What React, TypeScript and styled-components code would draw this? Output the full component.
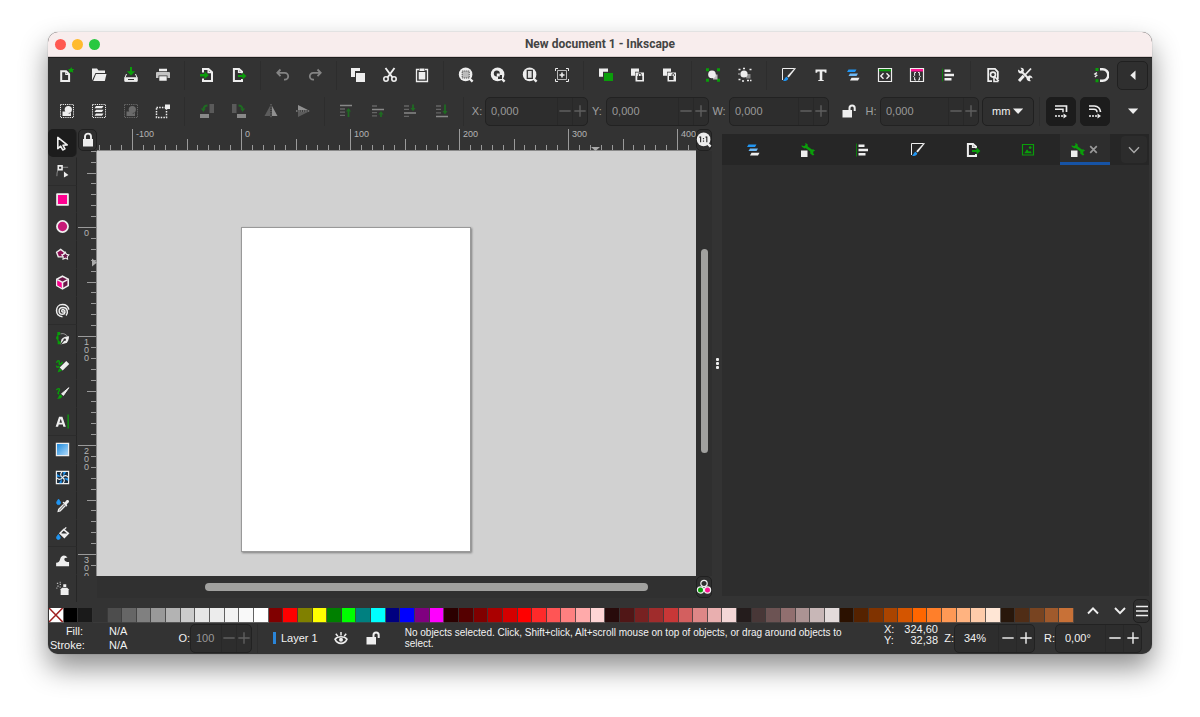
import React from "react";
import styled, { createGlobalStyle, css } from "styled-components";

const W = "#eeeeee";
const G = "#0a9e0a";
const P = "#ff1493";
const B = "#2196f3";
const BG = "#333333";

const GlobalStyle = createGlobalStyle`
  * { box-sizing: border-box; }
  body {
    margin: 0;
    background: #fff;
    font-family: "Liberation Sans", Arial, sans-serif;
    font-size: 11px;
    color: #f2f2f2;
  }
  button, input, select { font: inherit; color: inherit; margin: 0; padding: 0; border: 0; background: none; }
`;

/* ---------- icons, drawn on a 16 unit grid ---------- */

const dup = (
  <>
    <path d="M1 1h9v3H5v6H1z" fill={W} />
    <path d="M6 6h9v9H6z" fill={W} />
  </>
);
const magnifier = (
  <>
    <circle cx="7.6" cy="7.4" r="6.8" fill={W} />
    <path d="M11 11l3.6 3.6" stroke={W} strokeWidth="2.4" />
  </>
);
const layers = (
  <>
    <path d="M3.5 2.5h8l-1.5 2.4H2z" fill={B} />
    <path d="M5 6.6h8l-1.5 2.4h-8z" fill="#6fb9f5" />
    <path d="M6.5 10.8h8L13 13.4H5z" fill={W} />
  </>
);
const docExport = (
  <>
    <path d="M11 6.2V4.6L8 1.9H2.9v12.2H11v-2.2" fill="none" stroke={W} strokeWidth="2" />
    <path d="M7.6 1.5v3.8h3.8" fill="none" stroke={W} strokeWidth="1.4" />
    <path d="M7 8h4.500V5.600L15.400 9l-3.900 3.400V10H7z" fill={G} />
  </>
);
const wrench = (
  <>
    <path d="M1 8.500h6.500V15H1z" fill={W} />
    <path d="M5 4l7.500 5.500" stroke={G} strokeWidth="2.600" />
    <path d="M5.200.8L7.800 2.400 7.400 5.600 4.600 6.600 1.800 4.800l-.2-1.600 2.400 1 1.600-1.200z" fill={G} />
    <path d="M15.200 8.400L13.400 9.400l-.2 1.800 1.200 1.600-1.600.6-2.600-2 .2-3 2.600-1.200z" fill={G} />
  </>
);
const alignIcon = (
  <>
    <path d="M1.500 1.500v13" stroke="#0a7a0a" strokeWidth="1" />
    <path d="M3.500 2.500h6v2.600h-6zM3.500 6.700h9.500v2.600H3.500zM3.500 10.900h7v2.600h-7z" fill={W} />
  </>
);
const fillStroke = (
  <>
    <path d="M1.500 13V1.500h12" fill="none" stroke={W} strokeWidth="1" />
    <path d="M15 1.200L7.800 10.600 6.200 9.200 13.800 1z" fill={W} />
    <path d="M5.600 9.800l1.700 1.600c-.5 2.200-2.600 2.700-5.300 2.600 1.500-1 1.600-3.600 3.600-4.200z" fill={B} />
  </>
);
const dotted = <path d="M1.500 1.500h13v13h-13z" fill="none" stroke={W} strokeWidth="1" strokeDasharray="1.200 1" />;
const shapes = (
  <>
    <path d="M3.500 8.500h4c1 0 1 2 3.500 2l1-1.500v4H3.500z" fill={W} />
    <circle cx="9.300" cy="6.500" r="3.600" fill={W} />
  </>
);
const padlockOpen = (
  <>
    <path d="M1.500 7h9.500v7.500H1.500z" fill={W} />
    <path d="M8.500 7V5a2.600 2.600 0 0 1 5.200 0v3" fill="none" stroke={W} strokeWidth="2" />
  </>
);

const icons: Record<string, React.ReactNode> = {
  newDoc: (
    <>
      <path d="M2.200 4.200h4.900l3 3v6.900H2.200z" fill="none" stroke={W} strokeWidth="2" />
      <path d="M6.800 4v3.500h3.500" fill="none" stroke={W} strokeWidth="1.200" />
      <path d="M12.200 0l1 1.900 2.200.2-1.600 1.500.5 2.200-2.100-1-2.100 1 .5-2.200L9 2.100l2.200-.2z" fill={G} />
    </>
  ),
  open: (
    <>
      <path d="M1 13.500v-12h5l1.500 2h6.500V6H4.500z" fill={W} />
      <path d="M5 7h10.500l-1.700 7H2.200z" fill={W} />
    </>
  ),
  save: (
    <>
      <path d="M8 0v5" stroke={G} strokeWidth="2" />
      <path d="M3.800 4.200h8.400L8 8.600z" fill={G} />
      <path d="M3.500 7L2 10.500V14h12v-3.500L12.500 7" fill="none" stroke={W} strokeWidth="1" />
      <path d="M1.500 10.200h13v4.600h-13zM5 12v1h6v-1z" fill={W} fillRule="evenodd" />
    </>
  ),
  print: (
    <>
      <path d="M4 1.800h8v2.400H4z" fill={W} />
      <path d="M2 5h12a1 1 0 0 1 1 1v5h-2.500V8.500h-9V11H1V6a1 1 0 0 1 1-1z" fill="#c4c4c4" />
      <path d="M4.300 9.200h7.400v4.600H4.300z" fill={W} />
    </>
  ),
  importDoc: (
    <>
      <path d="M4 5.500V1.900h5.500L13 5.200v8.900H4v-2.600" fill="none" stroke={W} strokeWidth="2" />
      <path d="M9.200 1.500v4h4" fill="none" stroke={W} strokeWidth="1.400" />
      <path d="M1 6.900h4.500V4.400L9.800 8.200 5.500 12V9.400H1z" fill={G} />
    </>
  ),
  exportDoc: docExport,
  undo: <path d="M5.500 2.500L2.300 5.800l3.200 3.300M2.500 5.800h7.300a3 3 0 0 1 0 6.800H9" fill="none" stroke="#848484" strokeWidth="1.800" />,
  redo: <path d="M10.500 2.500l3.200 3.300-3.200 3.300M13.500 5.800H6.200a3 3 0 0 0 0 6.800H7" fill="none" stroke="#848484" strokeWidth="1.800" />,
  copy: dup,
  cut: (
    <>
      <path d="M3.500 1l7.200 9.800M12.500 1L5.300 10.800" stroke={W} strokeWidth="1.900" />
      <circle cx="4" cy="12" r="2.200" fill="none" stroke={W} strokeWidth="1.600" />
      <circle cx="12" cy="12" r="2.200" fill="none" stroke={W} strokeWidth="1.600" />
    </>
  ),
  paste: (
    <>
      <path d="M5 2.500H2.500v12h11v-12H11" fill="none" stroke={W} strokeWidth="1.300" />
      <path d="M5.500 1.500h5V4h-5z" fill={W} />
      <path d="M4.700 5h6.600v7.500H4.700z" fill={W} />
    </>
  ),
  zoomSel: (
    <>
      {magnifier}
      <path d="M4.200 4h7v7h-7z" fill="#bbb" stroke="#444" strokeWidth=".9" strokeDasharray="1.200 .8" />
    </>
  ),
  zoomDraw: (
    <>
      {magnifier}
      <path d="M8 8h4v4H8z" fill={BG} />
      <circle cx="6.800" cy="6.400" r="3" fill={BG} />
      <path d="M6.800 6.400h3v3h-3z" fill={W} />
    </>
  ),
  zoomPage: (
    <>
      {magnifier}
      <path d="M5.300 3.400h5v8h-5z" fill="#ddd" stroke={BG} strokeWidth="1.300" />
    </>
  ),
  zoomCenter: (
    <>
      <path d="M3.500 3.500h9v9h-9z" fill="none" stroke="#bbb" strokeWidth="1" />
      <path d="M8 5.500v5M5.500 8h5" stroke={W} strokeWidth="1.600" />
      <path d="M1.500 4V1.500H4M12 1.500h2.500V4M14.500 12v2.500H12M4 14.500H1.500V12" fill="none" stroke={W} strokeWidth="1" />
    </>
  ),
  duplicate: (
    <>
      <path d="M1 1.500h9v3.200H5v5H1z" fill={W} />
      <path d="M6 6h9v8H6z" fill={G} />
    </>
  ),
  clone: (
    <>
      <path d="M1 1.500h8v3.300H5v4H1zM5.500 5.500H14v9H5.500z" fill={W} />
      <path d="M7.300 9h5v4h-5z" fill={BG} />
      <path d="M8.400 9V7.600a1.400 1.400 0 0 1 2.800 0V9" fill="none" stroke={BG} strokeWidth="1" />
    </>
  ),
  unclone: (
    <>
      <path d="M1 1.500h8v3.300H5v4H1zM5.500 5.500H14v9H5.500z" fill={W} />
      <path d="M7 9h4.500v4H7z" fill={BG} />
      <path d="M10 9V7.800a1.200 1.200 0 0 1 2.400 0v1" fill="none" stroke={BG} strokeWidth="1" />
    </>
  ),
  group: (
    <>
      <path d="M1 1.200h3v3H1zM12 1.200h3v3h-3zM1 11.800h3v3H1zM12 11.800h3v3h-3z" fill={G} />
      <path d="M8 7.500h4.500v5H8z" fill="#bbb" />
      <circle cx="7" cy="7.400" r="3.800" fill={W} />
    </>
  ),
  ungroup: (
    <>
      <path d="M9 7h4.500v4.500H9z" fill="#888" />
      <circle cx="7" cy="7" r="3.600" fill={W} />
      <path d="M1.500 2.500h2M6 1.500h2M12.500 2.500h2M1.500 12.500h2M5 14h2M10 13.500h2M13 13.500h1.500M1.500 7h1" stroke={W} strokeWidth="1.700" />
    </>
  ),
  fillStroke,
  text: <path d="M2.500 2.500h11v3.200h-1.600l-.5-1.200H9.300v8.600h1.400V14H5.300v-.9h1.400V4.500H4.600l-.5 1.200H2.500z" fill={W} />,
  layers,
  xml: (
    <>
      <path d="M1.500 1.500h13v13h-13z" fill="none" stroke={W} strokeWidth="1.200" />
      <path d="M2 2.200h12v2H2z" fill={G} />
      <path d="M6.500 6.200L3.800 9l2.700 2.800M9.500 6.200L12.200 9l-2.700 2.800" fill="none" stroke={W} strokeWidth="1.400" />
    </>
  ),
  selectors: (
    <>
      <path d="M1.500 1.500h13v13h-13z" fill="none" stroke={W} strokeWidth="1.200" />
      <path d="M2 2h12v2.400H2z" fill={P} />
      <path d="M7 5.500H5.600v3l-1 1 1 1v2.500H7M9 5.500h1.400v3l1 1-1 1v2.500H9" fill="none" stroke={W} strokeWidth="1" />
    </>
  ),
  align: alignIcon,
  docProps: (
    <>
      <path d="M12.800 12V4.800L10 1.900H3.200v12.200H7" fill="none" stroke={W} strokeWidth="1.800" />
      <circle cx="8" cy="7.600" r="2.500" fill="none" stroke={W} strokeWidth="1.600" />
      <path d="M9 9l4.800 5M9 10v4.500h4.500" stroke={W} strokeWidth="1.600" fill="none" />
    </>
  ),
  prefs: (
    <>
      <path d="M4 4l8.500 8.500" stroke={W} strokeWidth="2" />
      <path d="M1.200 2.400l2.400 1.800 1.200-1.400L3.400.7c2.600-.4 4.200 1.500 3.400 3.600L4.900 6.400c-2.200.7-4.500-1.400-3.700-4z" fill={W} />
      <path d="M9.500 11l2.500-2.500c2-.5 3.700 1 3.500 3l-1.800-1-1.200 1.500 1.300 2c-2.200.8-4.500-1-4.300-3z" fill={W} />
      <path d="M14 1.500L7.500 8.500" stroke={W} strokeWidth="1.800" />
      <path d="M6.800 8.800L2 14" stroke={W} strokeWidth="3" />
    </>
  ),
  snap: (
    <>
      <path d="M7 2.300h2.600a5.600 5.600 0 0 1 0 11.400H7" fill="none" stroke={W} strokeWidth="2.500" />
      <path d="M2.500 1h3v3h-3zM2.500 12.200h3v3h-3z" fill={G} />
      <path d="M4 5.600L1.800 7l2 1.400-2 1.600" fill="none" stroke={W} strokeWidth="1.300" />
    </>
  ),
  selAll: <>{dotted}{shapes}</>,
  selLayers: (
    <>
      {dotted}
      <path d="M5 3h7.500L11 5.200H3.500zM5 6.800h7.500L11 9H3.500zM5 10.600h7.500L11 12.800H3.500z" fill={W} />
    </>
  ),
  deselect: <g opacity=".3">{dotted}{shapes}</g>,
  selTouch: (
    <>
      <path d="M1.500 4.500h10v10h-10z" fill="none" stroke={W} strokeWidth="1.500" strokeDasharray="1.500 1.200" />
      <path d="M10 1.500h5V6h-5z" fill={W} />
    </>
  ),
  rotL: (
    <>
      <path d="M10.500 1H15v9h-4.500z" fill="#5a5a5a" />
      <path d="M1 11h9v4H1z" fill="#888" />
      <path d="M8.500 2.500C6 2.500 4.800 4 4.500 6" fill="none" stroke="#1f6b22" strokeWidth="2" />
      <path d="M1.800 5.500h5L4.400 9z" fill="#1f6b22" />
    </>
  ),
  rotR: (
    <>
      <path d="M1 1h4.500v9H1z" fill="#5a5a5a" />
      <path d="M6 11h9v4H6z" fill="#888" />
      <path d="M7.500 2.500C10 2.500 11.200 4 11.500 6" fill="none" stroke="#1f6b22" strokeWidth="2" />
      <path d="M9.200 5.500h5L11.600 9z" fill="#1f6b22" />
    </>
  ),
  flipH: (
    <>
      <path d="M7 3v10H1.500z" fill="#5c5c5c" />
      <path d="M8 1v14" stroke="#777" strokeWidth="1" strokeDasharray="1.500 .8" />
      <path d="M9 3v10h5.500z" fill="#909090" />
    </>
  ),
  flipV: (
    <>
      <path d="M3 7V2l10 5z" fill="#909090" />
      <path d="M1 8h14" stroke="#aaa" strokeWidth="1" strokeDasharray="1.500 .8" />
      <path d="M3 9v5l10-5z" fill="#5c5c5c" />
    </>
  ),
  toTop: (
    <>
      <path d="M2 2.500h12" stroke="#888" strokeWidth="1.700" />
      <path d="M2 6h5M2 9.200h5M2 12.400h5" stroke="#666" strokeWidth="1.300" />
      <path d="M10.500 14V6" stroke="#1f6b22" strokeWidth="1.800" />
      <path d="M8 8.500h5L10.500 5z" fill="#1f6b22" />
    </>
  ),
  raise: (
    <>
      <path d="M2 6.500h12" stroke="#888" strokeWidth="1.700" />
      <path d="M2 3h5M2 9.700h5M2 12.900h5" stroke="#666" strokeWidth="1.300" />
      <path d="M11 14v-4" stroke="#1f6b22" strokeWidth="1.800" />
      <path d="M8.500 11.500h5L11 8z" fill="#1f6b22" />
    </>
  ),
  lower: (
    <>
      <path d="M2 10h12" stroke="#888" strokeWidth="1.700" />
      <path d="M2 3h5M2 6.300h5M2 13.300h5" stroke="#666" strokeWidth="1.300" />
      <path d="M11 1.500v4" stroke="#1f6b22" strokeWidth="1.800" />
      <path d="M8.500 5h5L11 8.300z" fill="#1f6b22" />
    </>
  ),
  toBottom: (
    <>
      <path d="M2 13.500h12" stroke="#888" strokeWidth="1.700" />
      <path d="M2 3h5M2 6.300h5M2 9.800h5" stroke="#666" strokeWidth="1.300" />
      <path d="M11 1.500v8" stroke="#1f6b22" strokeWidth="1.800" />
      <path d="M8.500 8h5L11 11.500z" fill="#1f6b22" />
    </>
  ),
  padlockOpen,
  padlock: (
    <>
      <path d="M3 7h10v7.500H3z" fill={W} />
      <path d="M5 7.500V4.600a3 3 0 0 1 6 0v2.900" fill="none" stroke={W} strokeWidth="1.900" />
    </>
  ),
  scaleStroke: (
    <>
      <path d="M2 3h11.500v6" fill="none" stroke={W} strokeWidth="1.700" />
      <path d="M2 6.300h8v3" fill="none" stroke={W} strokeWidth="1.500" />
      <path d="M2 13h8" stroke={W} strokeWidth="1.700" strokeDasharray="2 1" />
      <path d="M10.500 10.500L14 13l-3.500 2.500z" fill={W} />
    </>
  ),
  scaleCorner: (
    <>
      <path d="M2 3h5.500a6 6 0 0 1 6 6" fill="none" stroke={W} strokeWidth="1.700" />
      <path d="M2 6.300h5a3 3 0 0 1 3 3" fill="none" stroke={W} strokeWidth="1.500" />
      <path d="M2 13h8" stroke={W} strokeWidth="1.700" strokeDasharray="2 1" />
      <path d="M10.500 10.500L14 13l-3.500 2.500z" fill={W} />
    </>
  ),
  triLeft: <path d="M10.500 3.500v9.500L5.300 8.300z" fill={W} />,
  triDown: <path d="M3 5.500h10.200L8.100 11z" fill={W} />,
  chevDown: <path d="M3 5.300L8 10.500l5-5.200" fill="none" stroke="#aaa" strokeWidth="1.400" />,
  up: <path d="M3 10.500L8 5.300l5 5.200" fill="none" stroke={W} strokeWidth="1.900" />,
  down: <path d="M3 5L8 10.200 13 5" fill="none" stroke={W} strokeWidth="1.900" />,
  menu: <path d="M2 3.500h12M2 8h12M2 12.500h12" stroke={W} strokeWidth="1.500" />,
  minus: <path d="M1.500 8h13" stroke="currentColor" strokeWidth="1.600" />,
  plus: <path d="M1.500 8h13M8 1.500v13" stroke="currentColor" strokeWidth="1.600" />,
  docExport,
  wrench,
  image: (
    <>
      <path d="M2.500 2.500h11v10.500h-11z" fill="none" stroke={G} strokeWidth="1.200" />
      <path d="M4.300 11.200L7 7.200l2 2.500 1.200-1 1.600 2.500z" fill={G} />
      <circle cx="10.200" cy="5.600" r="1.400" fill={G} />
    </>
  ),
  close: <path d="M4.500 4.500l7 7M11.500 4.500l-7 7" stroke="#999" strokeWidth="1.800" />,
  zoom1: (
    <>
      {magnifier}
      <path d="M4.600 4.600v5.600M3.400 5.400l1.200-.6M10.800 4.600v5.600M9.600 5.400l1.200-.6M7.500 6v1.200M7.500 8.600v1.200" stroke={BG} strokeWidth="1.200" />
    </>
  ),
  cms: (
    <>
      <circle cx="8" cy="4.500" r="3.200" fill="none" stroke={W} strokeWidth="1.200" />
      <circle cx="4.500" cy="11" r="3.100" fill={G} stroke={W} strokeWidth="1.200" />
      <circle cx="11.500" cy="11" r="3.100" fill={P} stroke={W} strokeWidth="1.200" />
    </>
  ),
  eye: (
    <>
      <path d="M2 9.200C4.500 6 11.500 6 14 9.200 11.500 14.800 4.500 14.800 2 9.200z" fill="none" stroke={W} strokeWidth="1.600" />
      <circle cx="8" cy="9.800" r="2" fill={W} />
      <path d="M8 2v3.500M2.800 3.800L4.800 6.200M13.200 3.800L11.200 6.200" stroke={W} strokeWidth="1.500" />
    </>
  ),
  arrow: <path d="M3 1.500v12l3-2.600 2.200 4 2.400-1.200-2-3.800 4.400-.4z" fill="none" stroke={W} strokeWidth="1.700" strokeLinejoin="round" />,
  node: (
    <>
      <path d="M2 13C2 8 3 5.500 5 4M7 3.500h7" fill="none" stroke="#8a8a8a" strokeWidth="1" />
      <path d="M3.500 2h4v4h-4z" fill={BG} stroke={W} strokeWidth="1.700" />
      <path d="M9.500 8v6.500l4.800-2.800z" fill={W} />
    </>
  ),
  rect: <path d="M2.200 2.200h11.600v11.600H2.200z" fill="#ff0090" stroke={W} strokeWidth="1.900" strokeLinejoin="round" />,
  ellipse: <circle cx="8" cy="8" r="5.900" fill="#c71a78" stroke={W} strokeWidth="1.900" />,
  star: (
    <>
      <path d="M6 2.500l4 3-1.500 5H3.500L1.700 5.600z" fill="#8e1155" stroke={W} strokeWidth="1.500" />
      <path d="M11 5.500l1.300 2.300 2.500.6-1.700 1.900.3 2.700-2.400-1.100-2.500 1.100.3-2.700L7.200 8.400l2.500-.6z" fill="#6a1748" stroke={W} strokeWidth="1.100" />
    </>
  ),
  cube: (
    <>
      <path d="M8 1.300l6.100 3.100v6.900L8 14.800l-6.100-3.500V4.400z" fill="#6a1748" stroke={W} strokeWidth="1.700" />
      <path d="M2.500 5.500l5 2.400v6L2.500 11z" fill="#ff0090" />
      <path d="M2.500 5L8 7.800 13.500 5M8 7.800v6.500" fill="none" stroke={W} strokeWidth="1.600" />
    </>
  ),
  spiral: (
    <path
      d="M9.400 9.200a1.300 1.300 0 1 1-.3-2c2.400.8 2 4.800-1.100 4.800-4.600 0-5-7 .2-7.200 5.400-.2 6.200 5.600 3.600 8.600M8 14.600C-.6 14.600-.4 1.600 8 1.600c3.600 0 6 2 6.800 5.400"
      fill="none" stroke={W} strokeWidth="1.600"
    />
  ),
  pen: (
    <>
      <path d="M2.500 1h3v3.200h-3zM1.200 5.800h2.600v3H1.200zM2.800 11h3.200v3H2.800z" fill={G} />
      <path d="M3.500 3l-1 4M2.500 8l1.500 4" stroke={G} strokeWidth="1.200" />
      <path d="M6 3c4-1 6 1 7.500 3" stroke="#999" fill="none" />
      <path d="M5.800 14.500l1-5.500c1.500-2.300 5-3.500 8.200-3.500-.2 3.500-1 6.300-3.700 7.600z" fill={W} />
      <path d="M5.800 14.500L10 9.500" stroke={BG} strokeWidth="1.100" />
      <circle cx="10.400" cy="9.200" r="1.300" fill={BG} />
    </>
  ),
  pencil: (
    <>
      <path d="M1.500 4c1.500-3 3.500-3 3 0s2 2.200 3.500-1M1.500 7c.5 2.500 2.500 2 3 .5" fill="none" stroke={G} strokeWidth="1.500" />
      <path d="M4.500 9.500l3 3-4.800 2z" fill={G} />
      <path d="M12 2.200l3.200 3.200-7 6.800-3.200-3.200z" fill={W} />
    </>
  ),
  brush: (
    <>
      <path d="M1.500 4.500c2-3 4-1.500 3 .5s-2.300 3 0 3.500" fill="none" stroke={G} strokeWidth="1.500" />
      <path d="M5.800 9l2 2c-.8 2.400-3 2.800-5.600 2.800 1.600-1 1.500-4.200 3.600-4.800z" fill={G} />
      <path d="M14.800 1.800L9 10 7 8.300z" fill={W} stroke={W} strokeWidth="1" />
    </>
  ),
  textTool: (
    <>
      <path d="M4.300 3h3.600l3.600 10.500H8.900L8.300 11.300H4l-.7 2.200H.7zM4.700 9.200h2.800L6.100 5z" fill={W} fillRule="evenodd" />
      <path d="M14 .5v15" stroke={G} strokeWidth="1.400" />
    </>
  ),
  gradient: <path d="M1.500 1.500h13v13h-13z" fill="url(#blueGrad)" stroke={W} strokeWidth="1.300" />,
  mesh: (
    <>
      <path d="M1.500 1.500h13v13h-13z" fill="#1d2f40" stroke={W} strokeWidth="1.300" />
      <path d="M8 8c1-3 1-4 .8-6h3zM8 8c3 1 4 1 6 .8v3zM8 8c-1 3-1 4-.8 6h-3zM8 8c-3-1-4-1-6-.8v-3z" fill={B} />
      <path d="M8 8C5.500 6 5.500 4 7.500 2M8 8c2-2.500 4-2.500 6-.5M8 8c2.500 2 2.500 4 .5 6M8 8c-2 2.500-4 2.500-6 .5" fill="none" stroke={W} strokeWidth="1.200" />
    </>
  ),
  dropper: (
    <>
      <path d="M3.800 1.200C5 3 5.800 4 5.800 5a2 2 0 0 1-4 0c0-1 .8-2 2-3.800z" fill={B} stroke={B} />
      <path d="M9.300 6.800L4 12.200l-.5 2 2-.5 5.300-5.400" fill="none" stroke={W} strokeWidth="1.500" />
      <path d="M8 4.500l1.300-.5 1 .7 2-2.200c1.500-1.300 3.700.5 2.200 2.200l-2 2 .6 1.200-1.200 1.300z" fill={W} />
    </>
  ),
  bucket: (
    <>
      <path d="M3.600 9c1.200 1.600 1.900 2.400 1.900 3.400a1.900 1.900 0 0 1-3.800 0c0-1 .7-1.800 1.900-3.400z" fill={B} stroke={B} />
      <path d="M9.300 3.800l4.900 4.100-4.200 4.300-4.600-4.400z" fill="none" stroke={W} strokeWidth="1.700" />
      <path d="M5.600 8h8.500l-4.100 4.200z" fill={W} />
      <path d="M9 4.500l3-3" fill="none" stroke={W} strokeWidth="1.400" />
    </>
  ),
  tweak: <path d="M1.200 14.200v-3.700c2.600 0 3.800-1.500 4.300-4C6.500 2.300 11.200 1.200 13.400 5.500c-2.200-.9-3.900.1-3.300 2 .4 1.300 2 2.200 4.900 2.200v4.500z" fill={W} />,
  spray: (
    <>
      <path d="M6 8.700l1.500-1.500h5.500l1.500 1.500V15H6z" fill={W} />
      <path d="M8.800 3.500h3.200v2.800H8.800z" fill={W} />
      <path d="M2 2.500h1.400M5 3.500h1.400M2.500 5.500h1.400M5 6.500h1M5 1.500h1M1.500 7.500h1" stroke="#bbb" strokeWidth="1.300" />
    </>
  ),
};

const Svg = styled.svg`
  display: block;
  flex: none;
`;

function Icon({ name, size = 16 }: { name: string; size?: number }) {
  return (
    <Svg width={size} height={size} viewBox="0 0 16 16" aria-hidden="true">
      {icons[name]}
    </Svg>
  );
}

/* ---------- window chrome ---------- */

const Screen = styled.div`
  min-height: 100vh;
  padding: 32px 48px 63px;
  display: flex;
  background: #fff;
`;

const Window = styled.div`
  flex: 1;
  min-width: 0;
  display: flex;
  flex-direction: column;
  border-radius: 10px;
  overflow: hidden;
  background: ${BG};
  box-shadow: 0 0 1px rgba(0, 0, 0, 0.5), 0 14px 28px rgba(0, 0, 0, 0.44);
`;

const TitleBar = styled.header`
  height: 25px;
  display: grid;
  grid-template-columns: 1fr auto 1fr;
  align-items: center;
  padding: 0 7px;
  background: #f8eded;
  border-bottom: 1px solid #d8cccc;
  color: #444;
`;

const Title = styled.h1`
  margin: 0;
  font: 700 12px/16px Roboto, "Liberation Sans", sans-serif;
`;

const Lights = styled.div`
  display: flex;
  gap: 6px;
`;

const Light = styled.button<{ $color: string }>`
  width: 11px;
  height: 11px;
  border-radius: 50%;
  background: ${(p) => p.$color};
`;

/* ---------- toolbars ---------- */

const Toolbar = styled.div<{ $first?: boolean }>`
  height: 36px;
  display: flex;
  align-items: center;
  padding: 0 3px;
  ${(p) => p.$first && css`
    padding-right: 4px;
    box-shadow: inset 0 1px #1e1e1e;
  `}
`;

const ToolButton = styled.button<{ $gap?: boolean }>`
  width: 32px;
  height: 30px;
  display: grid;
  place-items: center;
  ${(p) => p.$gap && css`margin-left: 7px;`}
`;

const Separator = styled.span<{ $tight?: boolean }>`
  width: 1px;
  height: 29px;
  margin: 0 ${(p) => (p.$tight ? 5 : 6)}px 0 5px;
  background: #2d2d2d;
`;

const Spacer = styled.span`
  flex: 1;
`;

const FramedButton = styled.button<{ $w: number; $h?: number; $dark?: boolean }>`
  width: ${(p) => p.$w}px;
  height: ${(p) => p.$h ?? 29}px;
  flex: none;
  justify-self: end;
  display: grid;
  place-items: center;
  place-content: center;
  border: 1px solid ${(p) => (p.$dark ? "#1c1c1c" : "#202020")};
  border-radius: 5px;
  background: ${(p) => (p.$dark ? "#1c1c1c" : "#2f2f2f")};
`;

const FieldLabel = styled.label<{ $on?: boolean; $w: number }>`
  width: ${(p) => p.$w}px;
  flex: none;
  text-align: ${(p) => (p.$on ? "right" : "center")};
  color: ${(p) => (p.$on ? "#f2f2f2" : "#a0a0a0")};
`;

const Spin = styled.div<{ $w: number; $on?: boolean }>`
  width: ${(p) => p.$w}px;
  height: 29px;
  flex: none;
  display: flex;
  border: 1px solid #222;
  border-radius: 5px;
  background: #2d2d2d;
  color: ${(p) => (p.$on ? "#f2f2f2" : "#5f5f5f")};

  input {
    flex: 1;
    min-width: 0;
    padding-left: ${(p) => (p.$on ? 9 : 5)}px;
    color: ${(p) => (p.$on ? "#f2f2f2" : "#999")};
  }
  button {
    width: ${(p) => (p.$on ? 18 : 15)}px;
    display: grid;
    place-items: center;
    border-left: 1px solid #282828;
  }
`;

interface SpinProps {
  id: string;
  label: string;
  labelW: number;
  w: number;
  value: string;
  on?: boolean;
  bright?: boolean;
}

function SpinField({ id, label, labelW, w, value, on, bright }: SpinProps) {
  return (
    <>
      <FieldLabel htmlFor={id} $w={labelW} $on={on || bright}>{label}</FieldLabel>
      <Spin $w={w} $on={on}>
        <input id={id} defaultValue={value} />
        <button aria-label="Decrease"><Icon name="minus" size={14} /></button>
        <button aria-label="Increase"><Icon name="plus" size={14} /></button>
      </Spin>
    </>
  );
}

const UnitBox = styled.div`
  position: relative;
  width: 52px;
  height: 29px;
  margin-left: 3px;

  select {
    appearance: none;
    width: 100%;
    height: 100%;
    padding-left: 9px;
    border: 1px solid #202020;
    border-radius: 5px;
    background: #2f2f2f;
  }
  svg {
    position: absolute;
    right: 8px;
    top: 6px;
    pointer-events: none;
  }
`;

const LockSlot = styled.button`
  width: 33px;
  height: 29px;
  display: grid;
  place-items: center;
  padding-left: 6px;
`;

/* ---------- work area ---------- */

const Main = styled.main`
  flex: 1;
  min-height: 473px;
  display: flex;
`;

const Toolbox = styled.nav`
  width: 29px;
  display: flex;
  flex-direction: column;
`;

const Tool = styled.button<{ $active?: boolean; $line?: boolean }>`
  flex: 1;
  display: grid;
  place-items: center;
  border-radius: ${(p) => (p.$active ? 5 : 0)}px;
  background: ${(p) => (p.$active ? "#1c1c1c" : "none")};
  border-top: 1px solid ${(p) => (p.$line ? "#2c2c2c" : "transparent")};
  border-right: 1px solid #262626;
`;

const Editor = styled.section`
  flex: 1;
  min-width: 0;
  display: grid;
  grid-template-columns: 20px minmax(0, 1fr) 16px;
  grid-template-rows: 22px minmax(0, 1fr) 22px;
  padding-bottom: 4px;
`;

const RulerBox = styled.div`
  contain: size;
  overflow: hidden;
  background: ${BG};
  svg { display: block; }
  text { fill: #b4b4b4; font-size: 9px; }
`;

const Canvas = styled.div`
  position: relative;
  overflow: hidden;
  background: #d1d1d1;
`;

const Sheet = styled.div`
  position: absolute;
  left: 144px;
  top: 76px;
  width: 230px;
  height: 325px;
  background: #fff;
  border: 1px solid #999;
  box-shadow: 1px 1px 2px rgba(0, 0, 0, 0.4);
`;

const HTrack = styled.div`
  padding: 7px 8% 0 18%;
  background: #303030;
  div { height: 8px; border-radius: 4px; background: #a1a19f; }
`;

const VTrack = styled.div`
  display: grid;
  grid-template-rows: 23fr 48fr 29fr;
  justify-items: center;
  background: #2f2f2f;
  div { grid-row: 2; width: 7px; border-radius: 4px; background: #a1a19f; }
`;

const CornerBlank = styled.div`
  background: ${BG};
`;

const Grip = styled.div`
  width: 10px;
  padding-bottom: 4px;
  display: flex;
  flex-direction: column;
  align-items: center;
  justify-content: center;
  gap: 1px;
  i { width: 3px; height: 3px; border-radius: 1px; background: #eee; }
`;

const Dock = styled.aside`
  width: 427px;
  margin: 5px 3px 6px 0;
  background: #2d2d2d;
`;

const TabBar = styled.div`
  height: 31px;
  display: flex;
  align-items: stretch;
  padding: 0 2px 0 3px;
  background: #262626;
`;

const Tab = styled.button<{ $active?: boolean }>`
  width: ${(p) => (p.$active ? 50 : 55)}px;
  display: flex;
  align-items: center;
  justify-content: center;
  ${(p) => p.$active && css`
    margin-left: 5px;
    background: #2d2d2d;
    box-shadow: inset 0 -3px #1653a5;
  `}
`;

const TabMenu = styled.button`
  width: 26px;
  margin: 2px 0 2px auto;
  display: grid;
  place-items: center;
  border-radius: 4px;
  background: #2c2c2c;
`;

/* ---------- palette and status ---------- */

const PaletteRow = styled.div`
  height: 21px;
  display: flex;
  align-items: flex-end;
  padding: 0 2px 0 1px;
`;

const Swatches = styled.div`
  flex: 1;
  height: 15px;
  display: flex;
`;

const Swatch = styled.button<{ $color: string }>`
  flex: 1 1 0;
  min-width: 0;
  background: ${(p) => p.$color};
  border: solid rgba(60, 60, 60, 0.8);
  border-width: 0 1px 1px 0;
`;

const NoneSwatch = styled(Swatch)`
  svg { display: block; width: 100%; height: 100%; }
`;

const PaletteButtons = styled.div`
  display: flex;
  margin-left: 5px;
`;

const PaletteButton = styled.button`
  width: 27px;
  height: 24px;
  display: grid;
  place-items: center;
`;

const StatusBar = styled.footer`
  height: 31px;
  display: flex;
  align-items: center;
  padding: 0 10px 1px 2px;
`;

const StyleTable = styled.dl`
  width: 127px;
  margin: 0;
  display: grid;
  grid-template-columns: 33px 1fr;
  column-gap: 26px;
  line-height: 14px;
  dt { text-align: right; }
  dd { margin: 0; }
`;

const LayerButton = styled.button`
  display: flex;
  align-items: center;
  gap: 5px;
  margin: 0 7px 0 9px;
  white-space: nowrap;
  &::before { content: ""; width: 3px; height: 12px; background: #2a85d8; }
`;

const StatusIcon = styled.button`
  width: 32px;
  height: 28px;
  flex: none;
  display: grid;
  place-items: center;
`;

const Message = styled.p`
  flex: 1;
  margin: 0 16px;
  font-size: 10px;
  line-height: 11px;
`;

const Coords = styled.dl`
  width: 54px;
  flex: none;
  margin: 0 6px 6px 4px;
  display: grid;
  grid-template-columns: 14px 1fr;
  line-height: 11px;
  dd { margin: 0; text-align: right; }
`;

/* ---------- rulers ---------- */

const STEP = 109;
const range = (from: number, to: number) => Array.from({ length: to - from + 1 }, (_, i) => from + i);

function HorizontalRuler() {
  const zero = 145;
  return (
    <RulerBox>
      <svg width="1600" height="22">
        {range(-13, 130).map((n) => {
          const x = Math.round(zero + (n * STEP) / 10) - 0.5;
          const top = n % 10 === 0 ? 0 : n % 5 === 0 ? 10 : 16;
          return <path key={n} d={`M${x} ${top}V22`} stroke="#9a9a9a" />;
        })}
        {range(-1, 4).map((n) => (
          <text key={n} x={zero + n * STEP + 3} y="8">{n * 100}</text>
        ))}
        <path d="M0 21.500H1600" stroke="#8a8a8a" />
        <path d="M494 18h9l-4.500 4z" fill="#aaa" />
      </svg>
    </RulerBox>
  );
}

function VerticalRuler() {
  const zero = 77;
  return (
    <RulerBox>
      <svg width="20" height="1200">
        {range(-7, 100).map((n) => {
          const y = Math.round(zero + (n * STEP) / 10) - 0.5;
          const left = n % 10 === 0 ? 1 : n % 5 === 0 ? 10 : 14;
          return <path key={n} d={`M${left} ${y}H20`} stroke="#9a9a9a" />;
        })}
        {range(0, 3).map((n) =>
          String(n * 100).split("").map((d, i) => (
            <text key={`${n}-${i}`} x="7" y={zero + n * STEP + 8 + i * 8}>{d}</text>
          ))
        )}
        <path d="M19.500 0V1200" stroke="#8a8a8a" />
        <path d="M15 107.500v8l5-4z" fill="#aaa" />
      </svg>
    </RulerBox>
  );
}

/* ---------- data ---------- */

const commandGroups = [
  ["newDoc", "open", "save", "print"],
  ["importDoc", "exportDoc"],
  ["undo", "redo"],
  ["copy", "cut", "paste"],
  ["zoomSel", "zoomDraw", "zoomPage", "zoomCenter"],
  ["duplicate", "clone", "unclone"],
  ["group", "ungroup"],
  ["fillStroke", "text", "layers", "xml", "selectors", "align"],
  ["docProps", "prefs"],
];
const tightAfter = [2, 5];

const selectGroups = [
  ["selAll", "selLayers", "deselect", "selTouch"],
  ["rotL", "rotR", "flipH", "flipV"],
  ["toTop", "raise", "lower", "toBottom"],
];

const tools = [
  "arrow", "node", "rect", "ellipse", "star", "cube", "spiral", "pen", "pencil",
  "brush", "textTool", "gradient", "mesh", "dropper", "bucket", "tweak", "spray",
];
const toolLines = ["rect", "pen", "gradient", "tweak"];

const dockTabs = ["layers", "wrench", "align", "fillStroke", "docExport", "image"];

const palette = (
  "000000 1a1a1a 333333 4d4d4d 666666 808080 999999 b3b3b3 cccccc e6e6e6 ececec f2f2f2 f9f9f9 ffffff " +
  "800000 ff0000 808000 ffff00 008000 00ff00 008080 00ffff 000080 0000ff 800080 ff00ff " +
  "2b0000 550000 800000 aa0000 d40000 ff0000 ff2a2a ff5555 ff8080 ffaaaa ffd5d5 " +
  "280b0b 501616 782121 a02c2c c83737 d35f5f de8787 e9afaf f4d7d7 " +
  "241c1c 483737 6c5353 916f6f ac9393 c8b7b7 e3dbdb " +
  "2b1100 552200 803300 aa4400 d45500 ff6600 ff7f2a ff9955 ffb380 ffccaa ffe6d5 " +
  "28170b 502d16 784421 a05a2c c87137"
).split(" ");

export default function App() {
  return (
    <Screen>
      <GlobalStyle />
      <Window>
        <TitleBar>
          <Lights>
            <Light $color="#ff5850" aria-label="Close" />
            <Light $color="#ffbb2e" aria-label="Minimize" />
            <Light $color="#28c840" aria-label="Zoom" />
          </Lights>
          <Title>New document 1 - Inkscape</Title>
        </TitleBar>

        <Toolbar $first>
          {commandGroups.map((group, i) => (
            <React.Fragment key={i}>
              {i > 0 && <Separator $tight={tightAfter.includes(i - 1)} />}
              {group.map((name) => (
                <ToolButton key={name} aria-label={name}><Icon name={name} /></ToolButton>
              ))}
            </React.Fragment>
          ))}
          <Spacer />
          <ToolButton aria-label="Snapping"><Icon name="snap" /></ToolButton>
          <FramedButton $w={31} aria-label="Snap options"><Icon name="triLeft" /></FramedButton>
        </Toolbar>

        <Toolbar>
          {selectGroups.map((group, i) => (
            <React.Fragment key={i}>
              {i > 0 && <Separator $tight={i === 2} />}
              {group.map((name) => (
                <ToolButton key={name} aria-label={name}><Icon name={name} /></ToolButton>
              ))}
            </React.Fragment>
          ))}
          <Separator $tight />
          <SpinField id="x" label="X:" labelW={16} w={103} value="0,000" />
          <SpinField id="y" label="Y:" labelW={18} w={103} value="0,000" />
          <SpinField id="w" label="W:" labelW={20} w={100} value="0,000" />
          <LockSlot aria-label="Lock proportions"><Icon name="padlockOpen" /></LockSlot>
          <SpinField id="h" label="H:" labelW={18} w={99} value="0,000" />
          <UnitBox>
            <select aria-label="Unit" defaultValue="mm"><option>mm</option></select>
            <Icon name="triDown" />
          </UnitBox>
          <Separator />
          <FramedButton $w={30} $dark aria-label="Scale stroke width"><Icon name="scaleStroke" /></FramedButton>
          <Spacer />
          <FramedButton $w={30} $dark aria-label="Scale rounded corners"><Icon name="scaleCorner" /></FramedButton>
          <ToolButton $gap aria-label="More"><Icon name="triDown" /></ToolButton>
        </Toolbar>

        <Main>
          <Toolbox>
            {tools.map((name, i) => (
              <Tool key={name} $active={i === 0} $line={toolLines.includes(name)} aria-label={name}>
                <Icon name={name} size={15} />
              </Tool>
            ))}
          </Toolbox>

          <Editor>
            <FramedButton $w={19} $h={22} aria-label="Lock guides"><Icon name="padlock" /></FramedButton>
            <HorizontalRuler />
            <FramedButton $w={16} $h={22} aria-label="Zoom 1:1"><Icon name="zoom1" /></FramedButton>
            <VerticalRuler />
            <Canvas><Sheet /></Canvas>
            <VTrack><div /></VTrack>
            <CornerBlank />
            <HTrack><div /></HTrack>
            <FramedButton $w={16} $h={22} aria-label="Color management"><Icon name="cms" /></FramedButton>
          </Editor>

          <Grip><i /><i /><i /></Grip>

          <Dock>
            <TabBar>
              {dockTabs.map((name) => (
                <Tab key={name} aria-label={name}><Icon name={name} /></Tab>
              ))}
              <Tab $active aria-label="Object properties">
                <Icon name="wrench" />
                <Icon name="close" size={15} />
              </Tab>
              <TabMenu aria-label="Dialogs"><Icon name="chevDown" /></TabMenu>
            </TabBar>
          </Dock>
        </Main>

        <PaletteRow>
          <Swatches>
            <NoneSwatch $color="#fff" aria-label="None">
              <svg viewBox="0 0 14 14" preserveAspectRatio="none">
                <defs>
                  <linearGradient id="blueGrad" x1="0" y1="0" x2="1" y2="1">
                    <stop offset="0" stopColor="#1787dc" />
                    <stop offset="1" stopColor="#b5dcfa" />
                  </linearGradient>
                </defs>
                <path d="M0 0l14 14M14 0L0 14" stroke="#a02020" strokeWidth="1.500" />
              </svg>
            </NoneSwatch>
            {palette.map((c, i) => (
              <Swatch key={i} $color={`#${c}`} aria-label={`#${c}`} />
            ))}
          </Swatches>
          <PaletteButtons>
            <PaletteButton aria-label="Previous row"><Icon name="up" /></PaletteButton>
            <PaletteButton aria-label="Next row"><Icon name="down" /></PaletteButton>
            <FramedButton $w={17} $h={24} aria-label="Palettes"><Icon name="menu" /></FramedButton>
          </PaletteButtons>
        </PaletteRow>

        <StatusBar>
          <StyleTable>
            <dt>Fill:</dt><dd>N/A</dd>
            <dt>Stroke:</dt><dd>N/A</dd>
          </StyleTable>
          <SpinField id="opacity" label="O:" labelW={13} w={62} value="100" bright />
          <Separator />
          <LayerButton>Layer 1</LayerButton>
          <StatusIcon aria-label="Toggle visibility"><Icon name="eye" /></StatusIcon>
          <StatusIcon aria-label="Toggle lock"><Icon name="padlockOpen" /></StatusIcon>
          <Message>
            No objects selected. Click, Shift+click, Alt+scroll mouse on top of objects, or drag around objects to select.
          </Message>
          <Coords>
            <dt>X:</dt><dd>324,60</dd>
            <dt>Y:</dt><dd>32,38</dd>
          </Coords>
          <SpinField id="zoom" label="Z:" labelW={10} w={81} value="34%" on />
          <SpinField id="rotation" label="R:" labelW={20} w={87} value="0,00°" on />
        </StatusBar>
      </Window>
    </Screen>
  );
}
